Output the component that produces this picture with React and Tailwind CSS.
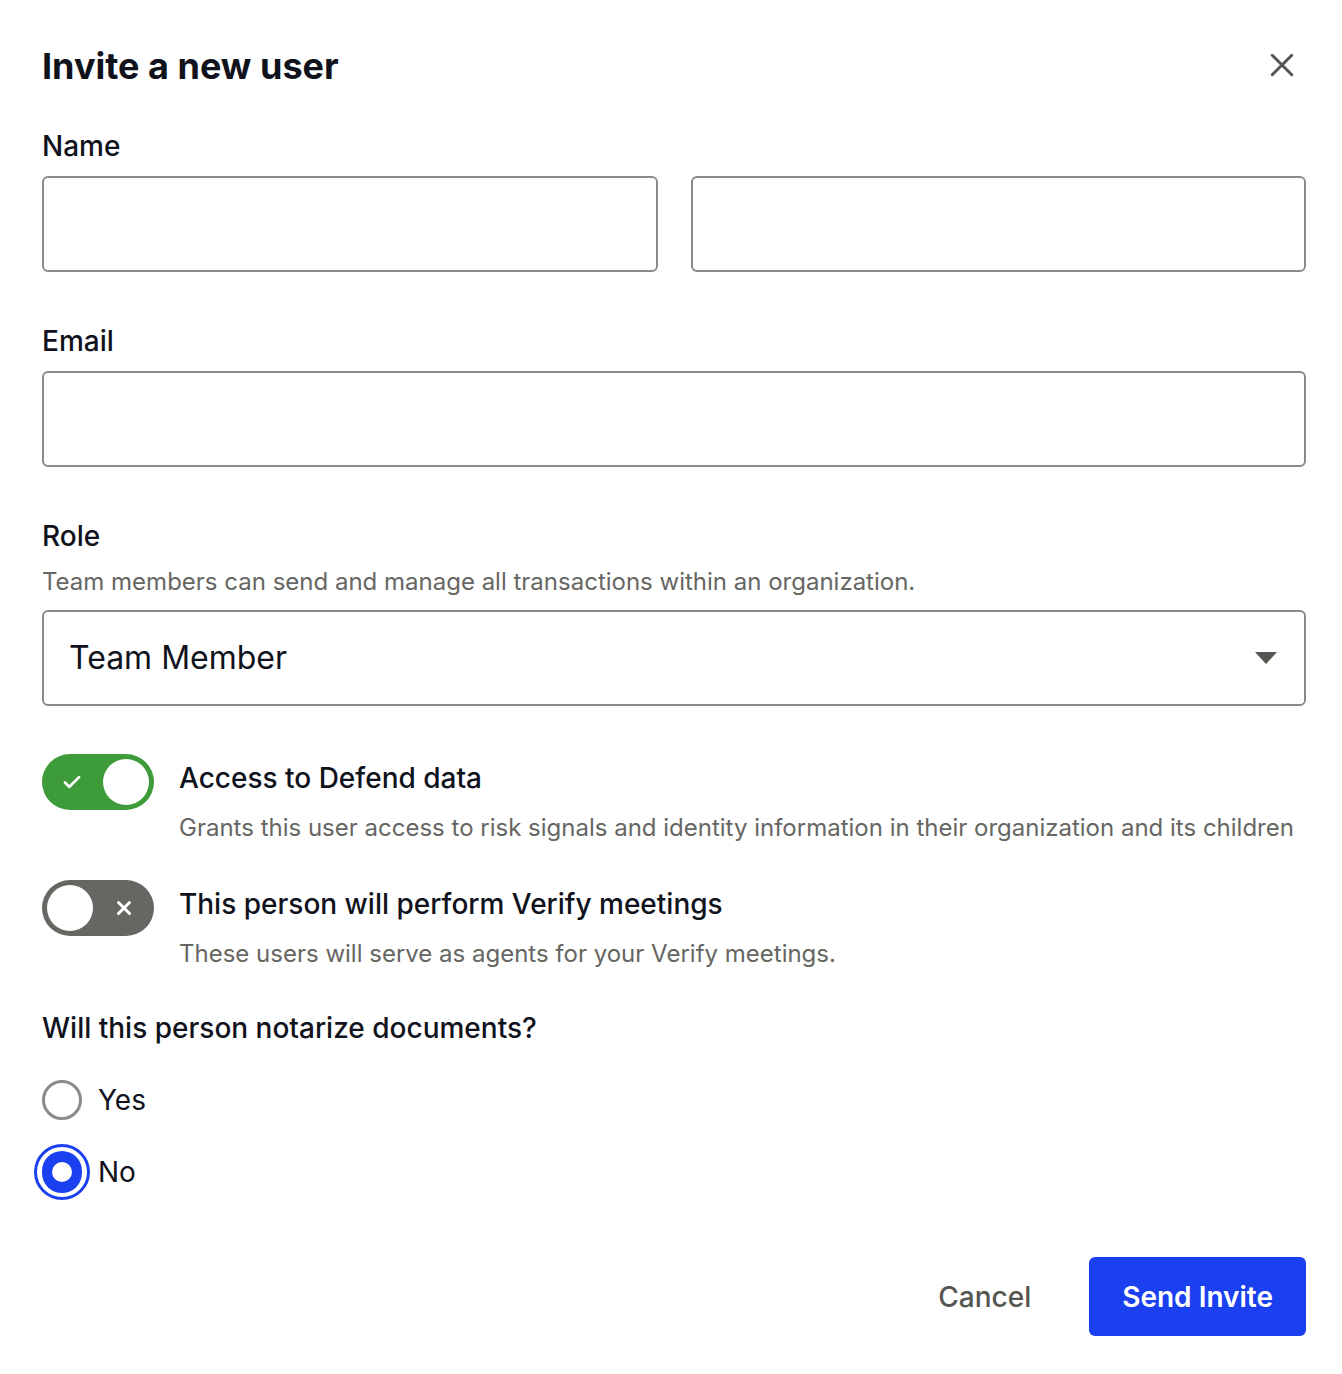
import React, { useState } from "react"

const font = { fontFamily: "Inter, 'Noto Sans', sans-serif" }

const Toggle = ({ on, onClick }) => (
  <button
    onClick={onClick}
    className={`relative flex items-center shrink-0 w-[112px] h-[56px] rounded-full ${on ? "bg-[#3d9b3a]" : "bg-[#676662]"}`}
  >
    {on ? (
      <>
        <svg className="absolute left-[17px] w-[26px] h-[26px]" viewBox="0 0 24 24" fill="none" stroke="white" strokeWidth="2.6" strokeLinecap="round" strokeLinejoin="round">
          <path d="M5.5 12.5l4 4L18.5 7.5" />
        </svg>
        <span className="absolute right-[5px] w-[46px] h-[46px] rounded-full bg-white" />
      </>
    ) : (
      <>
        <span className="absolute left-[5px] w-[46px] h-[46px] rounded-full bg-white" />
        <svg className="absolute right-[18px] w-[24px] h-[24px]" viewBox="0 0 24 24" fill="none" stroke="white" strokeWidth="3" strokeLinecap="round">
          <path d="M6.5 6.5l11 11M17.5 6.5l-11 11" />
        </svg>
      </>
    )}
  </button>
)

const Input = ({ className = "" }) => (
  <input className={`h-[96px] border-2 border-[#8a8a86] rounded-[6px] outline-none px-6 text-[28px] ${className}`} />
)

export default function App() {
  const [defend, setDefend] = useState(true)
  const [verify, setVerify] = useState(false)
  const [notarize, setNotarize] = useState("no")

  return (
    <div style={font} className="w-[1342px] min-h-[1374px] bg-white pl-[42px] pr-[36px] pt-[44px] text-[#10121c]">
      {/* Header */}
      <div className="flex items-start justify-between">
        <h1 className="text-[36px] leading-[44px] font-bold">Invite a new user</h1>
        <button className="mt-[3px] mr-[6px] text-[#555552]">
          <svg className="w-[36px] h-[36px]" viewBox="0 0 24 24" fill="none" stroke="currentColor" strokeWidth="2" strokeLinecap="round">
            <path d="M5.5 5.5l13 13M18.5 5.5l-13 13" />
          </svg>
        </button>
      </div>

      {/* Name */}
      <label className="block mt-[43px] text-[28px] leading-[30px] font-medium">Name</label>
      <div className="mt-[15px] grid grid-cols-2 gap-[33px]">
        <Input />
        <Input />
      </div>

      {/* Email */}
      <label className="block mt-[54px] text-[28px] leading-[30px] font-medium">Email</label>
      <Input className="mt-[15px] w-full block" />

      {/* Role */}
      <label className="block mt-[54px] text-[28px] leading-[30px] font-medium">Role</label>
      <p className="mt-[17px] text-[24px] leading-[28px] text-[#666663]">
        Team members can send and manage all transactions within an organization.
      </p>
      <div className="mt-[14px] h-[96px] border-2 border-[#8a8a86] rounded-[6px] flex items-center justify-between pl-[25px] pr-[27px]">
        <span className="text-[32px]">Team Member</span>
        <svg className="w-[22px] h-[12px]" viewBox="0 0 22 12">
          <path d="M0 0h22L11 12z" fill="#555552" />
        </svg>
      </div>

      {/* Toggles */}
      <div className="mt-[48px] flex gap-[25px]">
        <Toggle on={defend} onClick={() => setDefend(!defend)} />
        <div className="pt-[7px]">
          <div className="text-[28px] leading-[34px] font-medium">Access to Defend data</div>
          <div className="mt-[18px] text-[24px] leading-[30px] text-[#666663]">
            Grants this user access to risk signals and identity information in their organization and its children
          </div>
        </div>
      </div>
      <div className="mt-[37px] flex gap-[25px]">
        <Toggle on={verify} onClick={() => setVerify(!verify)} />
        <div className="pt-[7px]">
          <div className="text-[28px] leading-[34px] font-medium">This person will perform Verify meetings</div>
          <div className="mt-[18px] text-[24px] leading-[30px] text-[#666663]">
            These users will serve as agents for your Verify meetings.
          </div>
        </div>
      </div>

      {/* Notarize */}
      <div className="mt-[43px] text-[28px] leading-[32px] font-medium">Will this person notarize documents?</div>
      <div className="mt-[36px] flex flex-col gap-[32px]">
        {[
          ["yes", "Yes"],
          ["no", "No"],
        ].map(([value, label]) => (
          <label key={value} className="flex items-center gap-[16px] h-[40px] cursor-pointer" onClick={() => setNotarize(value)}>
            {notarize === value ? (
              <span className="relative w-[40px] h-[40px] flex items-center justify-center">
                <span className="absolute -inset-[8px] rounded-full border-[3px] border-[#1b40ef]" />
                <span className="w-[42px] h-[42px] rounded-full bg-[#1b40ef] flex items-center justify-center">
                  <span className="w-[20px] h-[20px] rounded-full bg-white" />
                </span>
              </span>
            ) : (
              <span className="w-[40px] h-[40px] rounded-full border-[3px] border-[#8a8a86]" />
            )}
            <span className="text-[28px]">{label}</span>
          </label>
        ))}
      </div>

      {/* Footer */}
      <div className="mt-[65px] flex justify-end items-center gap-[58px]">
        <button className="text-[28px] font-medium text-[#555552]">Cancel</button>
        <button className="h-[79px] px-[33px] rounded-[6px] bg-[#1b40ef] text-white text-[28px] font-semibold">Send Invite</button>
      </div>
    </div>
  )
}
